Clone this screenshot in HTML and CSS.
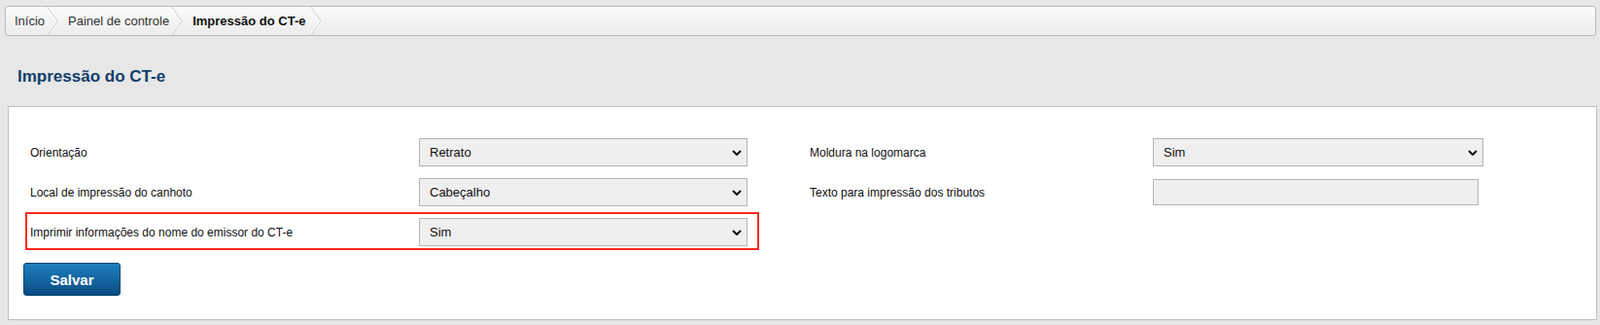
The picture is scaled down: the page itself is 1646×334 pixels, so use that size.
FILE: index.html
```html
<!DOCTYPE html>
<html lang="pt-BR">
<head>
<meta charset="utf-8">
<title>Impressão do CT-e</title>
<link rel="stylesheet" href="styles.css">
</head>
<body>
<nav class="breadcrumb">
  <a class="crumb first" href="#">Início</a>
  <span class="sep"><svg width="12" height="29" viewBox="0 0 12 29"><polyline points="0.5,0 11,14.5 0.5,29" fill="none" stroke="#c6c6c6" stroke-width="1"/><polyline points="-0.5,0 10,14.5 -0.5,29" fill="none" stroke="#ffffff" stroke-width="1"/></svg></span>
  <a class="crumb" href="#">Painel de controle</a>
  <span class="sep"><svg width="12" height="29" viewBox="0 0 12 29"><polyline points="0.5,0 11,14.5 0.5,29" fill="none" stroke="#c6c6c6" stroke-width="1"/><polyline points="-0.5,0 10,14.5 -0.5,29" fill="none" stroke="#ffffff" stroke-width="1"/></svg></span>
  <span class="crumb current">Impressão do CT-e</span>
  <span class="sep"><svg width="12" height="29" viewBox="0 0 12 29"><polyline points="0.5,0 11,14.5 0.5,29" fill="none" stroke="#c6c6c6" stroke-width="1"/><polyline points="-0.5,0 10,14.5 -0.5,29" fill="none" stroke="#ffffff" stroke-width="1"/></svg></span>
</nav>

<h1 class="page-title">Impressão do CT-e</h1>

<section class="panel">
  <div class="row">
    <div class="pair">
      <label class="label">Orientação</label>
      <select class="control"><option>Retrato</option></select>
    </div>
    <div class="pair right">
      <label class="label">Moldura na logomarca</label>
      <select class="control"><option>Sim</option></select>
    </div>
  </div>
  <div class="row">
    <div class="pair">
      <label class="label">Local de impressão do canhoto</label>
      <select class="control"><option>Cabeçalho</option></select>
    </div>
    <div class="pair right">
      <label class="label">Texto para impressão dos tributos</label>
      <input class="control text" type="text">
    </div>
  </div>
  <div class="row">
    <div class="highlight">
      <div class="pair">
        <label class="label">Imprimir informações do nome do emissor do CT-e</label>
        <select class="control"><option>Sim</option></select>
      </div>
    </div>
  </div>
  <div class="actions">
    <button class="btn" type="button">Salvar</button>
  </div>
</section>
</body>
</html>
```

FILE: styles.css
```css
* { box-sizing: border-box; }

body {
  margin: 0;
  padding: 6px 4px 0 5px;
  background: #e7e7e7;
  font-family: "Liberation Sans", Arial, sans-serif;
  color: #222;
}

.breadcrumb {
  display: flex;
  align-items: stretch;
  height: 31px;
  border: 1px solid #b9b9b9;
  border-radius: 3px;
  background: linear-gradient(#fbfbfb, #ececec);
  font-size: 13px;
  overflow: hidden;
}

.crumb {
  display: flex;
  align-items: center;
  padding: 0 2px 0 10px;
  color: #333;
  text-decoration: none;
}

.crumb.first { padding-left: 9px; }

.crumb.current {
  font-weight: bold;
  color: #111;
  padding-right: 5px;
}

.sep {
  display: flex;
  width: 12px;
}

.sep svg { display: block; }

.page-title {
  margin: 32px 0 20px 13px;
  font-size: 17px;
  line-height: 20px;
  font-weight: bold;
  color: #0f3e6c;
}

.panel {
  margin-left: 3px;
  width: 1635px;
  border: 1px solid #bfbfbf;
  background: #fff;
  padding: 32px 22px 24px 22px;
}

.row {
  display: flex;
  align-items: center;
  height: 29px;
  margin-bottom: 12px;
}

.pair {
  display: flex;
  align-items: center;
}

.pair.right { margin-left: 64px; }

.pair.right .label { width: 353px; }

.label {
  width: 400px;
  font-size: 12px;
  color: #111;
}

.control {
  height: 29px;
  width: 338px;
  border: 1px solid #b4b4b4;
  border-radius: 0;
  background-color: #efefef;
  font-family: "Liberation Sans", Arial, sans-serif;
  font-size: 13px;
  color: #111;
  padding: 0 24px 0 10px;
  margin: 0;
}

select.control {
  -webkit-appearance: none;
  appearance: none;
  background-image: url("data:image/svg+xml;utf8,<svg xmlns='http://www.w3.org/2000/svg' width='10' height='6' viewBox='0 0 10 6'><polyline points='1,1 5,5 9,1' fill='none' stroke='%23111' stroke-width='2'/></svg>");
  background-repeat: no-repeat;
  background-position: right 5px center;
}

.pair.right select.control { width: 340px; }

.control.text {
  width: 335px;
  height: 27px;
}

.highlight {
  display: flex;
  border: 2px solid #fb2a20;
  margin: -6px 0 -4px -5px;
  padding: 4px 10px 2px 3px;
}

.actions {
  margin-top: 17px;
  margin-left: -7px;
}

.btn {
  width: 100px;
  height: 34px;
  border: 1px solid #0a4776;
  border-radius: 3px;
  background: linear-gradient(#1d7fbe, #0a4c82);
  color: #fff;
  font-family: "Liberation Sans", Arial, sans-serif;
  font-size: 15px;
  font-weight: bold;
  padding: 0;
}
```
